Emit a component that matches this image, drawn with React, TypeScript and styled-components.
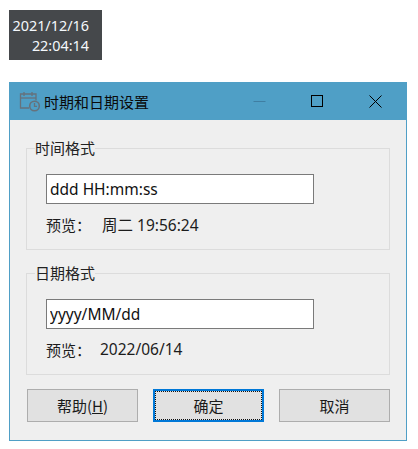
import React from "react";
import styled, { createGlobalStyle } from "styled-components";

const Global = createGlobalStyle`
  html, body { margin: 0; padding: 0; background: #fff; }
  body { font-family: "Noto Sans", "Noto Sans CJK SC", sans-serif; }
`;

const Page = styled.div`
  width: 418px;
  height: 449px;
  padding: 10px 0 0 9px;
  box-sizing: border-box;
  overflow: hidden;
`;

const ClockWidget = styled.div`
  width: 93px;
  height: 50px;
  box-sizing: border-box;
  padding: 6px 13px 0 0;
  background: #45484b;
  color: #f4f8fc;
  font-size: 14.4px;
  line-height: 20px;
  text-align: right;
`;

const Dialog = styled.div`
  margin-top: 22px;
  width: 398px;
  height: 359px;
  box-sizing: border-box;
  border: 1px solid #4f9fc6;
  border-top: 0;
  background: #efefef;
  display: flex;
  flex-direction: column;
`;

const TitleBar = styled.div`
  flex: none;
  height: 38px;
  margin: 0 -1px;
  background: #4f9fc6;
  display: flex;
  align-items: center;
  padding: 0 3px 0 10px;
`;

const Title = styled.span`
  margin-left: 3px;
  font-family: "Noto Sans CJK SC", sans-serif;
  font-size: 15px;
  color: #0a0a0a;
  flex: 1;
`;

const WinButton = styled.div`
  width: 58px;
  height: 38px;
  display: flex;
  align-items: center;
  justify-content: center;
`;

const Body = styled.div`
  flex: 1;
  display: flex;
  flex-direction: column;
  padding: 18px 16px 0 16px;
`;

const Group = styled.fieldset`
  height: 112px;
  margin: 0 0 13px;
  padding: 0 0 0 19px;
  box-sizing: border-box;
  border: 1px solid #dcdcdc;
  min-width: 0;
  &:last-of-type { margin-bottom: 14px; }
`;

const Legend = styled.legend`
  margin-left: -11px;
  padding: 0;
  width: 60px;
  font-family: "Noto Sans CJK SC", sans-serif;
  font-size: 15px;
  line-height: 20px;
  color: #222;
`;

const FormatInput = styled.input`
  display: block;
  width: 268px;
  height: 30px;
  margin-top: 16px;
  box-sizing: border-box;
  border: 1px solid #7a7a7a;
  background: #fff;
  padding: 0 3px;
  outline: none;
  font-family: "Noto Sans", sans-serif;
  font-size: 15.5px;
  color: #111;
`;

const PreviewRow = styled.div`
  display: flex;
  margin-top: 9px;
  height: 22px;
  align-items: center;
  font-size: 15px;
  color: #1c1c1c;
`;

const PreviewLabel = styled.span<{ $width: number }>`
  width: ${p => p.$width}px;
  font-family: "Noto Sans CJK SC", sans-serif;
`;

const PreviewValue = styled.span`
  font-family: "Noto Sans", "Noto Sans CJK SC", sans-serif;
  font-size: 15.5px;
`;

const ButtonRow = styled.div`
  display: flex;
  gap: 15px;
  padding-left: 1px;
`;

const Btn = styled.button<{ $focus?: boolean }>`
  width: 111px;
  height: 33px;
  padding: 0;
  box-sizing: border-box;
  background: #e1e1e1;
  border: ${p => (p.$focus ? "2px solid #0078d7" : "1px solid #adadad")};
  outline: ${p => (p.$focus ? "1px dotted #111" : "none")};
  outline-offset: ${p => (p.$focus ? "-3px" : "0")};
  font-family: "Noto Sans CJK SC", sans-serif;
  font-size: 15px;
  color: #1a1a1a;
`;

const Under = styled.span`
  text-decoration: underline;
`;

const CalendarIcon = () => (
  <svg width="22" height="22" viewBox="0 0 22 22" fill="none" stroke="#66727c" strokeWidth="1.3">
    <path d="M10 18H1.5V4H17V10.5" />
    <path d="M1.5 8H17" />
    <path d="M5 2V6M13 2V6" />
    <circle cx="15.5" cy="16" r="4.8" strokeWidth="1.6" />
    <path d="M15.5 13V16.3H18" />
  </svg>
);

export default function App() {
  return (
    <Page>
      <Global />
      <ClockWidget>
        2021/12/16
        <br />
        22:04:14
      </ClockWidget>
      <Dialog>
        <TitleBar>
          <CalendarIcon />
          <Title>时期和日期设置</Title>
          <WinButton>
            <svg width="13" height="13" viewBox="0 0 13 13">
              <path d="M0.5 6.5H12.5" stroke="#3f7ea2" strokeWidth="1" />
            </svg>
          </WinButton>
          <WinButton>
            <svg width="12" height="12" viewBox="0 0 12 12" fill="none">
              <rect x="0.5" y="0.5" width="11" height="11" stroke="#000" strokeWidth="1" />
            </svg>
          </WinButton>
          <WinButton>
            <svg width="13" height="13" viewBox="0 0 13 13" fill="none">
              <path d="M0.5 0.5L12.5 12.5M12.5 0.5L0.5 12.5" stroke="#000" strokeWidth="1" />
            </svg>
          </WinButton>
        </TitleBar>
        <Body>
          <Group>
            <Legend>时间格式</Legend>
            <FormatInput defaultValue="ddd HH:mm:ss" readOnly />
            <PreviewRow>
              <PreviewLabel $width={56}>预览：</PreviewLabel>
              <PreviewValue>周二 19:56:24</PreviewValue>
            </PreviewRow>
          </Group>
          <Group>
            <Legend>日期格式</Legend>
            <FormatInput defaultValue="yyyy/MM/dd" readOnly />
            <PreviewRow>
              <PreviewLabel $width={54}>预览：</PreviewLabel>
              <PreviewValue>2022/06/14</PreviewValue>
            </PreviewRow>
          </Group>
          <ButtonRow>
            <Btn>
              帮助(<Under>H</Under>)
            </Btn>
            <Btn $focus>确定</Btn>
            <Btn>取消</Btn>
          </ButtonRow>
        </Body>
      </Dialog>
    </Page>
  );
}
